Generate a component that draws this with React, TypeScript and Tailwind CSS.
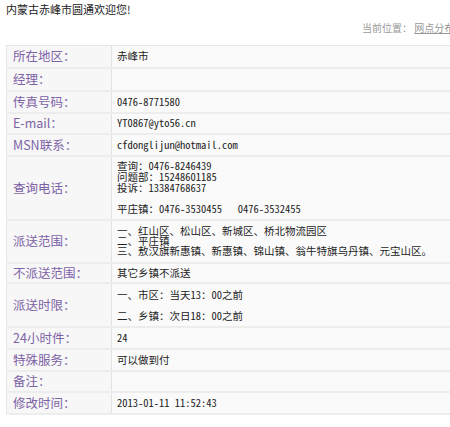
const rows: { label: string; h: string; value: React.ReactNode }[] = [
  { label: "所在地区：", h: "h-[22px]", value: "赤峰市" },
  { label: "经理：", h: "h-[23px]", value: "" },
  { label: "传真号码：", h: "h-[22px]", value: "0476-8771580" },
  { label: "E-mail：", h: "h-[21px]", value: "YT0867@yto56.cn" },
  { label: "MSN联系：", h: "h-[22px]", value: "cfdonglijun@hotmail.com" },
  {
    label: "查询电话：",
    h: "h-[63px]",
    value: (
      <div className="pt-[3px] pb-[4px]">
        <div className="leading-[11px]">
          查询：0476-8246439
          <br />
          问题部：15248601185
          <br />
          投诉：13384768637
        </div>
        <div className="mt-[10px] leading-[12px]">平庄镇：0476-3530455&nbsp;&nbsp;&nbsp;0476-3532455</div>
      </div>
    ),
  },
  {
    label: "派送范围：",
    h: "h-[43px]",
    value: (
      <div className="leading-[10px]">
        一、红山区、松山区、新城区、桥北物流园区
        <br />
        二、平庄镇
        <br />
        三、敖汉旗新惠镇、新惠镇、锦山镇、翁牛特旗乌丹镇、元宝山区。
      </div>
    ),
  },
  { label: "不派送范围：", h: "h-[20px]", value: "其它乡镇不派送" },
  {
    label: "派送时限：",
    h: "h-[42px]",
    value: (
      <div className="leading-[21px]">
        一、市区：当天13：00之前
        <br />
        二、乡镇：次日18：00之前
      </div>
    ),
  },
  { label: "24小时件：", h: "h-[22px]", value: "24" },
  { label: "特殊服务：", h: "h-[22px]", value: "可以做到付" },
  { label: "备注：", h: "h-[21px]", value: "" },
  { label: "修改时间：", h: "h-[22px]", value: "2013-01-11 11:52:43" },
];

export default function App() {
  return (
    <div className="w-[450px] h-[427px] overflow-hidden bg-white font-['Noto_Sans_CJK_SC',sans-serif]">
      <div className="w-[560px]">
        <div className="pl-[6px] pt-[2px] text-[11px] leading-[14px] text-[#222]">内蒙古赤峰市圆通欢迎您!</div>
        <div className="pl-[362px] mt-[5px] text-[10px] leading-[14px] text-[#999] whitespace-nowrap">
          当前位置：&nbsp;
          <a href="#" className="underline text-[#999]">
            网点分布
          </a>
          &nbsp;&gt;&nbsp;内蒙古
        </div>
        <table className="ml-[6px] mt-[10px] w-[554px] border-collapse border-t border-l border-[#e6e6e6]">
          <tbody>
            {rows.map((r) => (
              <tr key={r.label} className={r.h}>
                <td className="w-[105px] bg-[#f7f7f7] border-b-2 border-r border-b-[#ededed] border-r-[#e2e2e2] pl-[6px] text-[12.5px] leading-[14px] text-[#7d62a6] whitespace-nowrap align-middle">
                  {r.label}
                </td>
                <td className="bg-[#fafafa] border-b-2 border-b-[#ededed] pl-[5px] text-[10.5px] leading-[14px] text-[#222] whitespace-nowrap align-middle [font-feature-settings:'hwid']">
                  {r.value}
                </td>
              </tr>
            ))}
          </tbody>
        </table>
      </div>
    </div>
  );
}
